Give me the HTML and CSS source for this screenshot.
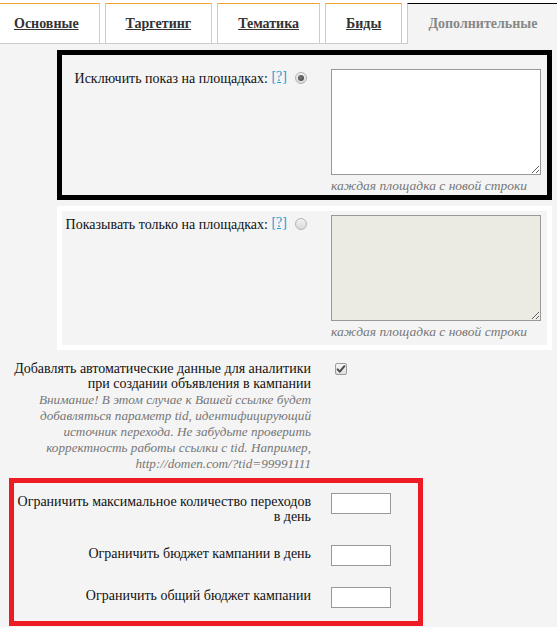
FILE: index.html
```html
<!DOCTYPE html>
<html lang="ru">
<head>
<meta charset="utf-8">
<title>Дополнительные</title>
<link rel="stylesheet" href="styles.css">
</head>
<body>
<nav class="tabs">
  <a class="tab" href="#">Основные</a>
  <a class="tab" href="#">Таргетинг</a>
  <a class="tab" href="#">Тематика</a>
  <a class="tab" href="#">Биды</a>
  <span class="tab tab-active">Дополнительные</span>
</nav>
<main class="content">
  <section class="site-box site-box-marked">
    <div class="site-row">
      <div class="site-label">Исключить показ на площадках: <a class="help" href="#">[?]</a></div>
      <div class="radio-cell"><span class="radio radio-checked"></span></div>
      <div class="site-field">
        <textarea class="sites"></textarea>
        <div class="hint">каждая площадка с новой строки</div>
      </div>
    </div>
  </section>
  <section class="site-box site-box-plain">
    <div class="site-row">
      <div class="site-label">Показывать только на площадках: <a class="help" href="#">[?]</a></div>
      <div class="radio-cell"><span class="radio"></span></div>
      <div class="site-field">
        <textarea class="sites" disabled></textarea>
        <div class="hint">каждая площадка с новой строки</div>
      </div>
    </div>
  </section>
  <section class="option-row">
    <div class="option-label">
      <div>Добавлять автоматические данные для аналитики<br>при создании объявления в кампании</div>
      <div class="note">Внимание! В этом случае к Вашей ссылке будет<br>добавляться параметр tid, идентифицирующий<br>источник перехода. Не забудьте проверить<br>корректность работы ссылки с tid. Например,<br>http://domen.com/?tid=99991111</div>
    </div>
    <span class="checkbox"><svg width="10" height="10" viewBox="0 0 10 10"><path d="M1.6 5.4 L3.8 7.6 L8.4 2.2" fill="none" stroke="#4a4a4a" stroke-width="2" stroke-linecap="round" stroke-linejoin="round"/></svg></span>
  </section>
  <section class="limits">
    <div class="limit-label">Ограничить максимальное количество переходов<br>в день</div>
    <input class="limit-input" type="text">
    <div class="limit-label">Ограничить бюджет кампании в день</div>
    <input class="limit-input" type="text">
    <div class="limit-label">Ограничить общий бюджет кампании</div>
    <input class="limit-input" type="text">
  </section>
</main>
</body>
</html>
```
FILE: styles.css
```css
html, body {
  margin: 0;
  padding: 0;
}
body {
  background: #f4f4f4;
  font-family: "Liberation Serif", "Times New Roman", serif;
  font-size: 14px;
  color: #111;
}
.tabs {
  display: flex;
  gap: 5px;
  background: #fff;
  padding-top: 3px;
  height: 40px;
  border-bottom: 1px solid #ccc;
  margin-left: -7px;
}
.tab {
  display: flex;
  align-items: center;
  padding: 0 20px;
  height: 39px;
  background: #fff;
  border: 1px solid #ccc;
  border-top-color: #f0a12c;
  border-bottom: none;
  color: #333;
  font-weight: bold;
  text-decoration: underline;
  white-space: nowrap;
}
.tab-active {
  background: #f4f4f4;
  border-top-color: #000;
  border-right: none;
  color: #888;
  text-decoration: none;
  height: 40px;
  margin-bottom: -1px;
  flex: 1 0 auto;
}
.content {
  padding-top: 6px;
}
.site-box {
  box-sizing: border-box;
  width: 495px;
  margin-left: 57px;
  border: 5px solid #fff;
  background: #f4f4f4;
}
.site-box-marked {
  border-color: #000;
  padding: 14px 0 1px;
}
.site-box-plain {
  margin-top: 6px;
  padding: 4px 0 5px;
}
.site-row {
  display: flex;
  align-items: flex-start;
}
.site-label {
  width: 225px;
  text-align: right;
  line-height: 16px;
  padding-top: 2px;
  white-space: nowrap;
}
.help {
  color: #1e9cd7;
  position: relative;
  top: -2px;
}
.radio-cell {
  width: 44px;
  padding-top: 3px;
}
.radio {
  display: block;
  box-sizing: border-box;
  width: 12px;
  height: 12px;
  margin-left: 8px;
  border-radius: 50%;
  border: 1px solid #b4b4b4;
  background: linear-gradient(#f2f2f2, #d9d9d9);
  position: relative;
}
.radio-checked::after {
  content: "";
  position: absolute;
  left: 2px;
  top: 2px;
  width: 6px;
  height: 6px;
  border-radius: 50%;
  background: radial-gradient(circle at 40% 40%, #777, #444);
}
.site-field {
  width: 210px;
}
.sites {
  display: block;
  box-sizing: border-box;
  width: 210px;
  height: 106px;
  margin: 0;
  border: 1px solid #999;
  background: #fff;
  font-family: inherit;
}
.sites:disabled {
  background: #ebebe4;
}
.hint {
  margin-top: 3px;
  font-style: italic;
  font-size: 13.5px;
  color: #777;
  line-height: 16px;
  white-space: nowrap;
}
.option-row {
  display: flex;
  align-items: flex-start;
  margin-top: 11px;
}
.option-label {
  width: 311px;
  text-align: right;
  line-height: 15px;
  white-space: nowrap;
}
.note {
  font-style: italic;
  font-size: 13.2px;
  color: #777;
  line-height: 16px;
  margin-top: 1px;
}
.checkbox {
  box-sizing: border-box;
  width: 12px;
  height: 12px;
  margin: 2px 0 0 24px;
  border: 1px solid #9c9c9c;
  border-radius: 2px;
  background: linear-gradient(#f6f6f6, #dedede);
  display: flex;
  align-items: center;
  justify-content: center;
}
.checkbox svg {
  display: block;
}
.limits {
  box-sizing: border-box;
  width: 414px;
  margin: 6px 0 0 9px;
  border: 5px solid #ed1c24;
  padding: 10px 0 13px;
  display: grid;
  grid-template-columns: 297px 60px;
  column-gap: 20px;
  row-gap: 21px;
  align-items: start;
}
.limit-label {
  text-align: right;
  line-height: 15px;
  padding-top: 1px;
  white-space: nowrap;
}
.limit-input {
  box-sizing: border-box;
  width: 60px;
  height: 21px;
  margin: 0;
  border: 1px solid #999;
  background: #fff;
  padding: 0 2px;
}
```
